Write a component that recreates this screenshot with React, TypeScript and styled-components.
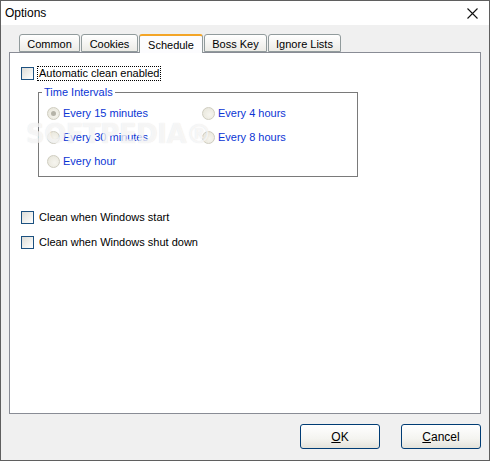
import React from "react"
import styled, { createGlobalStyle } from "styled-components"

const GlobalStyle = createGlobalStyle`
  html, body {
    margin: 0;
    padding: 0;
    background: #ffffff;
  }
  * {
    box-sizing: border-box;
  }
`

const Window = styled.div`
  width: 490px;
  height: 461px;
  border: 1px solid #5f5f5f;
  display: flex;
  flex-direction: column;
  font-family: "Liberation Sans", Arial, sans-serif;
  font-size: 11px;
  color: #000;
  position: relative;
  overflow: hidden;
`

const TitleBar = styled.div`
  height: 24px;
  background: #ffffff;
  display: flex;
  align-items: center;
  justify-content: space-between;
  padding: 0 11px 0 4px;
  font-size: 12px;
`

const CloseButton = styled.div`
  width: 12px;
  height: 12px;
  display: flex;
  align-items: center;
  justify-content: center;
`

const Body = styled.div`
  flex: 1;
  background: #f0f0f0;
  padding: 9px 8px 0 8px;
  display: flex;
  flex-direction: column;
`

const TabRow = styled.div`
  display: flex;
  gap: 1px;
  margin-left: 10px;
  height: 18px;
  align-items: flex-end;
  position: relative;
  z-index: 1;
`

const Tab = styled.div<{ $w: number; $active?: boolean }>`
  width: ${(p) => p.$w}px;
  height: ${(p) => (p.$active ? 19 : 18)}px;
  margin-bottom: ${(p) => (p.$active ? -1 : 0)}px;
  border: 1px solid #919b9c;
  border-bottom: ${(p) => (p.$active ? "none" : "1px solid #919b9c")};
  border-top: ${(p) => (p.$active ? "2px solid #f3a528" : "1px solid #919b9c")};
  border-radius: 3px 3px 0 0;
  background: ${(p) =>
    p.$active ? "#fcfcfe" : "linear-gradient(#ffffff, #ecebe6)"};
  display: flex;
  align-items: center;
  justify-content: center;
  padding-top: ${(p) => (p.$active ? 0 : 1)}px;
`

const Panel = styled.div`
  height: 362px;
  border: 1px solid #898c95;
  background: #ffffff;
  position: relative;
  padding: 13px 0 0 11px;
  display: flex;
  flex-direction: column;
`

const CheckRow = styled.div<{ $mt?: number }>`
  display: flex;
  align-items: center;
  gap: 3px;
  height: 15px;
  margin-top: ${(p) => p.$mt ?? 0}px;
`

const CheckBox = styled.div`
  width: 13px;
  height: 13px;
  border: 1px solid #1c5180;
  background: linear-gradient(135deg, #dcdcd7 0%, #f2f2ef 60%, #ffffff 100%);
  flex-shrink: 0;
`

const Label = styled.span<{ $focus?: boolean }>`
  padding: 0 1px;
  line-height: 13px;
  border: 1px ${(p) => (p.$focus ? "dotted #000" : "solid transparent")};
`

const GroupBox = styled.div`
  position: relative;
  margin: 11px 0 0 17px;
  width: 320px;
  height: 85px;
  border: 1px solid #7a7a7a;
  padding: 8px 0 0 8px;
  display: grid;
  grid-template-columns: 155px 1fr;
  grid-auto-rows: 24px;
`

const GroupTitle = styled.span`
  position: absolute;
  top: -8px;
  left: 3px;
  padding: 0 2px;
  background: #ffffff;
  color: #0b35d4;
  line-height: 14px;
`

const RadioRow = styled.div`
  display: flex;
  align-items: center;
  gap: 3px;
  color: #0b35d4;
`

const Radio = styled.div<{ $on?: boolean }>`
  width: 13px;
  height: 13px;
  border-radius: 50%;
  border: 1px solid #cfcdc0;
  background: radial-gradient(circle at 60% 60%, #f6f5ef 0%, #e6e4d8 100%);
  display: flex;
  align-items: center;
  justify-content: center;
  flex-shrink: 0;
  &::after {
    content: "";
    display: ${(p) => (p.$on ? "block" : "none")};
    width: 5px;
    height: 5px;
    border-radius: 50%;
    background: #b5b3a8;
  }
`

const Watermark = styled.div`
  position: absolute;
  left: 16px;
  top: 66px;
  font-family: "DejaVu Sans", sans-serif;
  font-weight: bold;
  font-size: 26px;
  letter-spacing: -0.5px;
  color: rgba(255, 255, 255, 0.7);
  text-shadow: 0 0 1px rgba(160, 160, 160, 0.3);
  pointer-events: none;
`

const ButtonRow = styled.div`
  display: flex;
  justify-content: flex-end;
  gap: 21px;
  margin-top: 10px;
`

const Button = styled.div`
  width: 80px;
  height: 25px;
  border: 1px solid #003c74;
  border-radius: 3px;
  background: linear-gradient(#ffffff 0%, #f4f4f0 60%, #e3e2da 100%);
  display: flex;
  align-items: center;
  justify-content: center;
  font-size: 12px;
  u {
    text-decoration: underline;
  }
`

const tabs = [
  { name: "Common", w: 61 },
  { name: "Cookies", w: 57 },
  { name: "Schedule", w: 64, active: true },
  { name: "Boss Key", w: 63 },
  { name: "Ignore Lists", w: 73 },
]

export default function App() {
  return (
    <>
      <GlobalStyle />
      <Window>
        <TitleBar>
          <span>Options</span>
          <CloseButton>
            <svg width="11" height="11" viewBox="0 0 11 11">
              <path d="M0.5 0.5 L10.5 10.5 M10.5 0.5 L0.5 10.5" stroke="#111" strokeWidth="1.1" />
            </svg>
          </CloseButton>
        </TitleBar>
        <Body>
          <TabRow>
            {tabs.map((t) => (
              <Tab key={t.name} $w={t.w} $active={t.active}>
                {t.name}
              </Tab>
            ))}
          </TabRow>
          <Panel>
            <CheckRow>
              <CheckBox />
              <Label $focus>Automatic clean enabled</Label>
            </CheckRow>
            <GroupBox>
              <GroupTitle>Time Intervals</GroupTitle>
              <RadioRow>
                <Radio $on />
                Every 15 minutes
              </RadioRow>
              <RadioRow>
                <Radio />
                Every 4 hours
              </RadioRow>
              <RadioRow>
                <Radio />
                Every 30 minutes
              </RadioRow>
              <RadioRow>
                <Radio />
                Every 8 hours
              </RadioRow>
              <RadioRow>
                <Radio />
                Every hour
              </RadioRow>
            </GroupBox>
            <CheckRow $mt={33}>
              <CheckBox />
              <Label>Clean when Windows start</Label>
            </CheckRow>
            <CheckRow $mt={10}>
              <CheckBox />
              <Label>Clean when Windows shut down</Label>
            </CheckRow>
            <Watermark>SOFTPEDIA®</Watermark>
          </Panel>
          <ButtonRow>
            <Button>
              <span>
                <u>O</u>K
              </span>
            </Button>
            <Button>
              <span>
                <u>C</u>ancel
              </span>
            </Button>
          </ButtonRow>
        </Body>
      </Window>
    </>
  )
}
